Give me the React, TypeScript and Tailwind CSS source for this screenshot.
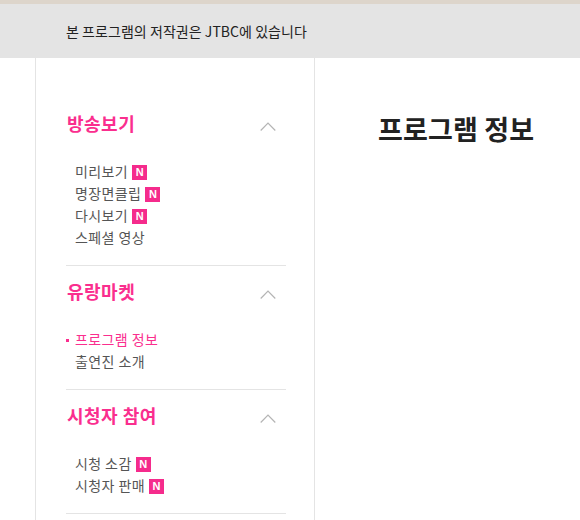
type Item = { label: string; isNew?: boolean; active?: boolean }

type Section = { title: string; items: Item[] }

const sections: Section[] = [
  {
    title: '방송보기',
    items: [
      { label: '미리보기', isNew: true },
      { label: '명장면클립', isNew: true },
      { label: '다시보기', isNew: true },
      { label: '스페셜 영상' },
    ],
  },
  {
    title: '유랑마켓',
    items: [{ label: '프로그램 정보', active: true }, { label: '출연진 소개' }],
  },
  {
    title: '시청자 참여',
    items: [
      { label: '시청 소감', isNew: true },
      { label: '시청자 판매', isNew: true },
    ],
  },
]

function Chevron() {
  return (
    <svg viewBox="0 0 16 9" aria-hidden="true" className="mt-[4px] h-[9px] w-[16px]" fill="none">
      <path d="M0.7 8.5 L8 1 L15.3 8.5" stroke="#b4b4b4" strokeWidth="1.2" />
    </svg>
  )
}

function NewBadge() {
  return (
    <span className="ml-[4px] flex h-[15px] w-[15px] items-center justify-center bg-[#f52b8c] font-['Liberation_Sans',sans-serif] text-[11px] leading-none font-bold text-white">
      N
    </span>
  )
}

export default function App() {
  return (
    <div className="h-[520px] w-[580px] overflow-hidden bg-white font-['Noto_Sans_CJK_KR','Noto_Sans',sans-serif]">
      <div className="h-[4px] bg-[#ddd5cb]" />
      <div className="flex h-[54px] items-center bg-[#e4e4e4] pl-[66px] text-[14px] tracking-[0.05px] text-[#222]">
        본 프로그램의 저작권은 JTBC에 있습니다
      </div>

      <div className="ml-[35px] flex h-[462px]">
        <aside className="w-[280px] shrink-0 border-x border-[#e4e4e4] pt-[40px] pl-[30px] pr-[28px]">
          {sections.map((section) => (
            <section key={section.title} className="border-b border-[#e4e4e4] pt-[12px] pb-[16px]">
              <div className="flex h-[28px] items-center justify-between pr-[10px]">
                <h2 className="-mt-[2px] pl-[1px] text-[18px] font-bold tracking-[0.5px] text-[#fa2e8e]">{section.title}</h2>
                <Chevron />
              </div>
              <ul className="mt-[23px]">
                {section.items.map((item) => (
                  <li key={item.label} className="relative flex h-[22px] items-center pl-[9px]">
                    {item.active && <span className="absolute top-[10px] left-0 h-[3px] w-[3px] bg-[#fa2e8e]" />}
                    <span className={`-mt-[1px] text-[14px] tracking-[0.4px] ${item.active ? 'text-[#fa2e8e]' : 'text-[#555]'}`}>
                      {item.label}
                    </span>
                    {item.isNew && <NewBadge />}
                  </li>
                ))}
              </ul>
            </section>
          ))}
        </aside>

        <main className="flex-1 pt-[52px] pl-[63px]">
          <h1 className="text-[27px] leading-[38px] font-bold tracking-[0.15px] text-[#222]">프로그램 정보</h1>
        </main>
      </div>
    </div>
  )
}
